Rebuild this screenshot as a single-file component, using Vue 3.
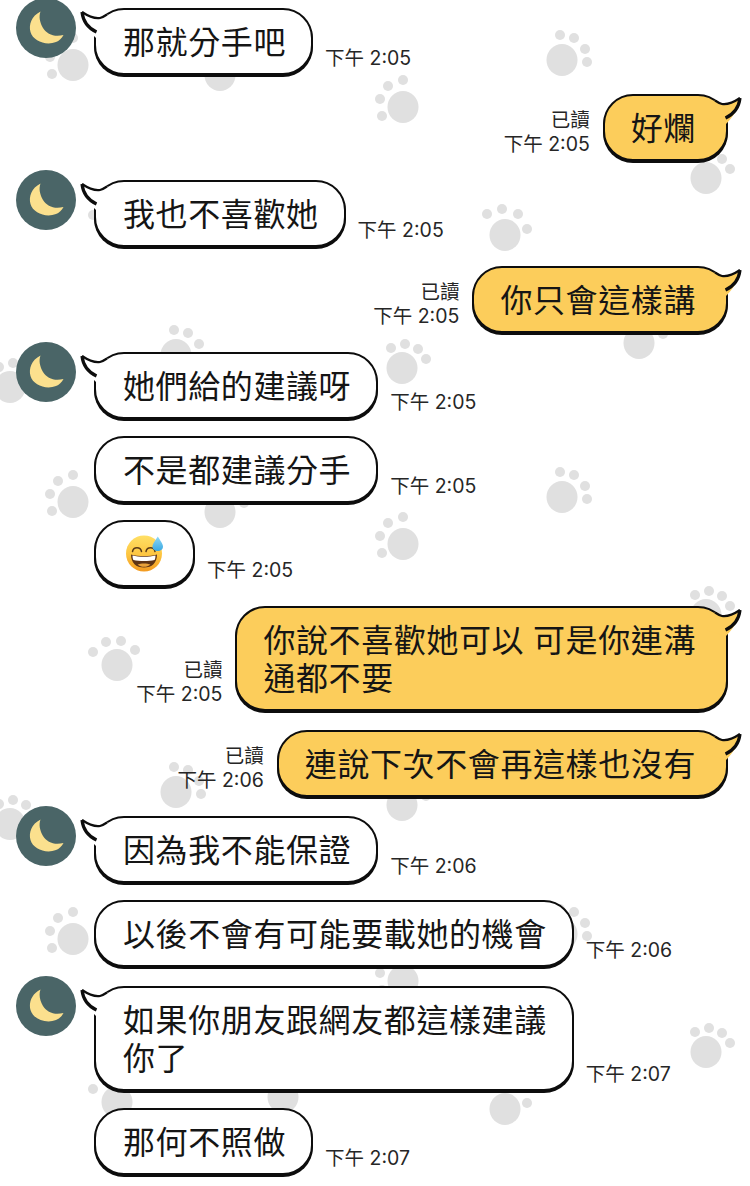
<script setup>
const toeSets = {
  A: [[0, -27], [-15, -21], [-23, -8], [-21, 9]],
  B: [[-2, -25], [12, -22], [23, -11], [25, 2]],
  C: [[-18, -21], [-3, -26], [13, -21], [22, -6]],
  D: [[-11, -20], [3, -24], [16, -19], [24, -9]],
  E: [[-24, -13], [-11, -23], [4, -24], [18, -15]]
}
const tile = [
  [73, 65, 'A'], [403, 107, 'A'], [562, 60, 'B'], [706, 178, 'D'], [505, 235, 'C'],
  [176, 355, 'B'], [402, 368, 'D'], [117, 228, 'E'], [220, 75, 'D'], [283, 223, 'D'],
  [10, 387, 'D'], [639, 343, 'D']
]
const paws = []
for (const off of [0, 437, 874]) {
  for (const [x, y, type] of tile) {
    paws.push({ key: `${x}-${y + off}`, x, y: y + off, toes: toeSets[type] })
  }
}

const messages = [
  { id: 1, side: 'left', avatar: true, text: '那就分手吧', time: '下午 2:05' },
  { id: 2, side: 'right', text: '好爛', time: '下午 2:05' },
  { id: 3, side: 'left', avatar: true, text: '我也不喜歡她', time: '下午 2:05' },
  { id: 4, side: 'right', text: '你只會這樣講', time: '下午 2:05' },
  { id: 5, side: 'left', avatar: true, text: '她們給的建議呀', time: '下午 2:05' },
  { id: 6, side: 'left', cont: true, text: '不是都建議分手', time: '下午 2:05' },
  { id: 7, side: 'left', cont: true, emoji: true, time: '下午 2:05' },
  { id: 8, side: 'right', text: '你說不喜歡她可以 可是你連溝\n通都不要', time: '下午 2:05' },
  { id: 9, side: 'right', text: '連說下次不會再這樣也沒有', time: '下午 2:06' },
  { id: 10, side: 'left', avatar: true, text: '因為我不能保證', time: '下午 2:06' },
  { id: 11, side: 'left', cont: true, text: '以後不會有可能要載她的機會', time: '下午 2:06' },
  { id: 12, side: 'left', avatar: true, text: '如果你朋友跟網友都這樣建議\n你了', time: '下午 2:07' },
  { id: 13, side: 'left', cont: true, text: '那何不照做', time: '下午 2:07' }
]
</script>

<template>
  <div class="page">
    <svg class="paws" width="750" height="1186" viewBox="0 0 750 1186" aria-hidden="true">
      <g v-for="p in paws" :key="p.key" fill="#e0e0e0">
        <ellipse :cx="p.x" :cy="p.y" rx="15.5" ry="16" />
        <circle v-for="(t, i) in p.toes" :key="i" :cx="p.x + t[0]" :cy="p.y + t[1]" r="5" />
      </g>
    </svg>

    <div class="thread">
      <div
        v-for="m in messages"
        :key="m.id"
        class="row"
        :class="[m.side, { cont: m.cont }]"
      >
        <svg v-if="m.avatar" class="avatar" width="60" height="60" viewBox="0 0 60 60">
          <circle cx="30" cy="30" r="30" fill="#4a6567" />
          <path
            d="M24.500 13.500C15.500 18 12.500 27 14.500 34C17 43 30 48 40 44C43 43 46 40 47.500 37C38 39.500 31 36 27 30C24 24.500 22.500 19 24.500 13.500Z"
            fill="#fbe08e"
          />
        </svg>

        <div v-if="m.side === 'right'" class="meta meta-right">
          <span>已讀</span>
          <span>{{ m.time }}</span>
        </div>

        <div class="bubble" :class="m.side">
          <svg v-if="m.avatar || m.side === 'right'" class="tail" width="40" height="40" viewBox="-14 0 40 40">
            <path class="tail-fill" d="M-12 4C-6 8 0 11 6 10C8 9.500 10 8.500 13 6L22 24L2 30C-6 22 -11 13 -12 4Z" />
            <path class="tail-line" d="M13 6.500C10 8.500 8 9.500 6 10C0 11 -6 8 -12 4" />
            <path class="tail-line heavy" d="M-12 4C-11 13 -6 20 2.500 24" />
          </svg>
          <span v-if="m.emoji" class="emoji">
            <svg width="38" height="38" viewBox="0 0 38 38">
              <defs>
                <linearGradient id="face" x1="0" y1="0" x2="0" y2="1">
                  <stop offset="0" stop-color="#ffe066" />
                  <stop offset="0.55" stop-color="#fdc43f" />
                  <stop offset="1" stop-color="#f29a20" />
                </linearGradient>
                <linearGradient id="drop" x1="0" y1="0" x2="0" y2="1">
                  <stop offset="0" stop-color="#8fd8f5" />
                  <stop offset="1" stop-color="#3aa8e2" />
                </linearGradient>
              </defs>
              <circle cx="18" cy="19.500" r="18" fill="url(#face)" />
              <path d="M6.500 17.500C7.500 12.500 14.500 12.500 15.500 17.500M20 17.500C21 12.500 28 12.500 29 17.500" fill="none" stroke="#5a3a17" stroke-width="1.500" stroke-linecap="round" />
              <path d="M5 20.500C12 22.500 24 22.500 31 20.500C31 29 26 33.500 18 33.500C10 33.500 5 29 5 20.500Z" fill="#5d3416" />
              <path d="M6.500 21.500C13 23.200 23 23.200 29.500 21.500C29.500 24 29 25.500 28.500 26C23 27.300 13 27.300 7.500 26C7 25.500 6.500 24 6.500 21.500Z" fill="#fff" />
              <path d="M11.500 30.500C15 29 21 29 24.500 30.500C22.500 32.300 20.500 32.800 18 32.800C15.500 32.800 13.500 32.300 11.500 30.500Z" fill="#e9a23a" />
              <path d="M31.800 2.500C33.800 6 37 9.500 37 12.500C37 15.300 34.700 17 31.800 17C28.900 17 26.500 15.300 26.500 12.500C26.500 9.500 29.800 6 31.800 2.500Z" fill="url(#drop)" />
            </svg>
          </span>
          <span v-else class="text">{{ m.text }}</span>
        </div>

        <div v-if="m.side === 'left'" class="meta meta-left">
          <span>{{ m.time }}</span>
        </div>
      </div>
    </div>
  </div>
</template>

<style scoped>
.page {
  position: relative;
  width: 750px;
  height: 1186px;
  overflow: hidden;
  background: #fff;
}
.paws {
  position: absolute;
  left: 0;
  top: 0;
}
.thread {
  position: relative;
  display: flex;
  flex-direction: column;
  padding-top: 8px;
}
.row {
  display: flex;
  align-items: flex-end;
  margin-bottom: 19px;
}
.row.cont {
  margin-top: -2px;
  padding-left: 94px;
}
.row.right {
  justify-content: flex-end;
  padding-right: 22px;
}
.avatar {
  flex: none;
  align-self: flex-start;
  margin: -10px 18px 0 16px;
}
.bubble {
  position: relative;
  flex: none;
  box-sizing: border-box;
  border: 2px solid #0d0d0d;
  border-radius: 30px;
  box-shadow: 0 2px 0 #0d0d0d;
  padding: 11px 25px 14px 27px;
  background: #fff;
  color: #151515;
  font-family: "Noto Sans CJK TC", "Noto Sans", sans-serif;
  font-size: 32px;
  letter-spacing: 0.6px;
  line-height: 38px;
}
.bubble.right {
  background: #fccd5b;
  padding: 11px 30px 14px 26px;
}
.text {
  display: block;
  white-space: pre-line;
  word-spacing: 1px;
}
.emoji {
  display: block;
  width: 45px;
  height: 38px;
  margin-top: 1px;
  margin-bottom: -1px;
}
.emoji svg {
  display: block;
  margin-left: 3px;
}
.tail {
  position: absolute;
  left: -16px;
  top: -2px;
  overflow: visible;
}
.bubble.right .tail {
  left: auto;
  right: -16px;
  transform: scaleX(-1);
}
.tail-fill {
  fill: #fff;
}
.bubble.right .tail-fill {
  fill: #fccd5b;
}
.tail-line {
  fill: none;
  stroke: #0d0d0d;
  stroke-width: 2.2;
}
.tail-line.heavy {
  stroke-width: 3.2;
}
.meta {
  display: flex;
  flex-direction: column;
  flex: none;
  padding-bottom: 5px;
  color: #262626;
  font-family: Inter, "Noto Sans CJK TC", sans-serif;
  font-size: 19.5px;
  line-height: 24px;
}
.meta-left {
  margin-left: 12px;
}
.meta-right {
  margin-right: 13px;
  align-items: flex-end;
}
</style>
